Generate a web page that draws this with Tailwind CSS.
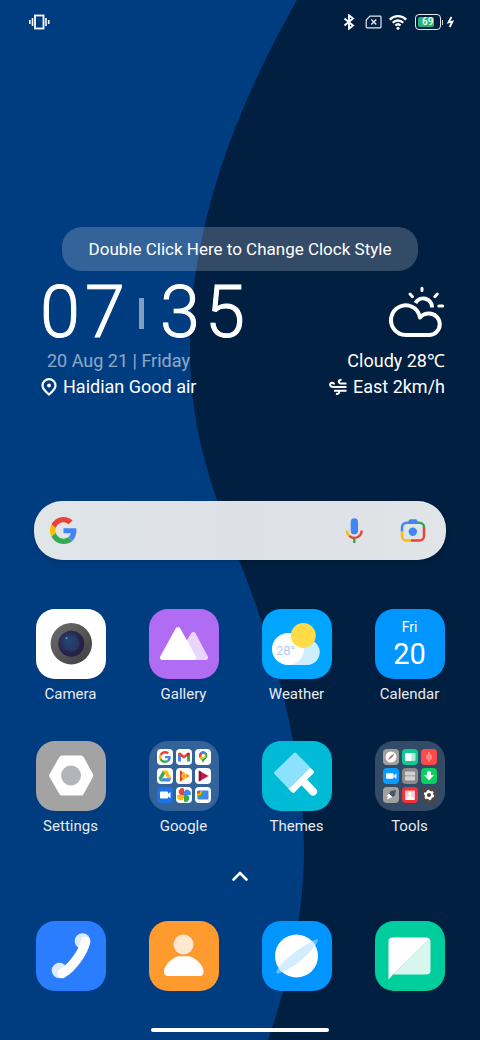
<!DOCTYPE html>
<html lang="en">
<head>
  <meta charset="UTF-8" />
  <meta name="viewport" content="width=device-width, initial-scale=1.0" />
  <title>Home Screen</title>
  <script src="https://cdn.jsdelivr.net/npm/@tailwindcss/browser@4"></script>
</head>
<body class="relative min-h-screen bg-[#003c80] font-[Roboto,sans-serif] text-white">
  <!-- Wallpaper -->
  <svg class="absolute inset-0 w-full h-full" viewBox="0 0 480 1040" preserveAspectRatio="none" aria-hidden="true">
    <path fill="#001f41" d="M297 0C229 120 190 235 190 350C190 435 216 500 243 570C270 640 303 740 304 850C304 925 285 990 268 1040H480V0Z" />
  </svg>

  <div class="relative min-h-screen flex flex-col">
    <!-- Status bar -->
    <header class="flex items-center justify-between h-11 pl-7 pr-[26px]">
      <svg class="w-[22px] h-4" viewBox="0 0 22 16" fill="none" stroke="#fff" stroke-width="1.6">
        <rect x="7" y="1.5" width="8.5" height="13" stroke-width="1.8" />
        <path d="M4.5 4v8M18 4v8M1.8 6v4M20.7 6v4" />
      </svg>
      <div class="flex items-center">
        <svg class="w-3 h-4 mr-[10px]" viewBox="0 0 12 16" fill="none" stroke="#fff" stroke-width="1.9">
          <path d="M1.500 4.500l8.500 7-4 3.200V1.300l4 3.200-8.500 7" />
        </svg>
        <svg class="w-[17px] h-[14px] mr-[7px]" viewBox="0 0 17 14" fill="none" stroke="#e4e9ef" stroke-width="1.2">
          <path d="M5 1.200H15.200a.8.8 0 0 1 .8.8V12a.8.8 0 0 1-.8.8H2a.8.8 0 0 1-.8-.8V5Z" />
          <path d="M6.300 4.600l5 5M11.300 4.600l-5 5" stroke-width="1.4" />
        </svg>
        <svg class="w-[18px] h-[15px] mr-2" viewBox="0 0 18 15" fill="none" stroke="#fff" stroke-width="2.3">
          <path d="M.8 4.600a11.600 11.600 0 0 1 16.400 0M3.700 7.700a7.500 7.500 0 0 1 10.600 0M6.400 10.500a3.800 3.800 0 0 1 5.200 0" />
          <circle cx="9" cy="13.200" r="1.500" fill="#fff" stroke="none" />
        </svg>
        <div class="flex items-center">
          <div class="w-[26px] h-4 rounded border border-white/90 p-[2px]">
            <div class="w-4 h-full pl-1 flex items-center rounded-xs bg-[#22b573] text-[10px] leading-none font-medium">69</div>
          </div>
          <div class="w-px h-[5px] ml-px bg-white/80"></div>
        </div>
        <svg class="w-[7px] h-3 ml-1" viewBox="0 0 7 12" fill="none" stroke="#fff" stroke-width="1.8"><path d="M4.500 1L1.500 6.500L5.500 5.500L2.700 11" /></svg>
      </div>
    </header>

    <main class="flex-1 flex flex-col">
      <button class="mt-[183px] mx-[62px] h-11 pt-px rounded-[20px] bg-white/20 text-[17px]">Double Click Here to Change Clock Style</button>

      <!-- Clock and weather -->
      <section class="pl-10 pr-[35px] text-[18px]">
        <div class="flex items-center justify-between h-[76px]">
          <div class="flex items-center pt-2 text-[72px] leading-none font-light [-webkit-text-stroke:1px_white]">
            <span class="w-[45px]">0</span>
            <span class="w-[45px]">7</span>
            <span class="w-[5px] h-[31px] ml-[9px] mr-4 bg-white/50"></span>
            <span class="w-[45px]">3</span>
            <span>5</span>
          </div>
          <svg class="w-[57px] h-[51px] mt-[5px]" viewBox="0 0 57 51" fill="none" stroke="#fff" stroke-width="4" stroke-linecap="round">
            <path stroke-linejoin="round" d="M18 49A14.800 14.800 0 1 1 24.500 21C29 23 31 27.500 32 31.500C34 29 37 27.500 41 27.500A10.700 10.700 0 0 1 41 49Z" />
            <path stroke-linecap="butt" d="M27.500 17A8.800 8.800 0 0 1 44 21.500" />
            <path stroke-width="3" d="M34 2.300V4.500M22 8l2.500 2.700M49.300 8l-2.500 2.700M50.800 20h4" />
          </svg>
        </div>
        <div class="flex items-center justify-between h-[26px]">
          <span class="pl-[7px] text-white/55">20 Aug 21 | Friday</span>
          <span>Cloudy 28℃</span>
        </div>
        <div class="flex items-center justify-between h-[27px]">
          <span class="flex items-center gap-[6px] pl-px">
            <svg class="w-4 h-[18px]" viewBox="0 0 16 18" fill="none" stroke="#fff" stroke-width="2.2">
              <path d="M8 16.500C4.500 13.700 1.500 11 1.500 7.600a6.500 6.500 0 0 1 13 0C14.500 11 11.500 13.700 8 16.500Z" />
              <circle cx="8" cy="7.500" r="1.900" fill="#fff" stroke="none" />
            </svg>
            Haidian Good air
          </span>
          <span class="flex items-center gap-[6px]">
            <svg class="w-[18px] h-[18px]" viewBox="0 0 18 18" fill="none" stroke="#fff" stroke-width="2">
              <path d="M17.500 5.500H12C9 5.500 9 1.700 12.500 1.700M17.500 9H4C.5 9 .3 4.800 3 4.800C4.300 4.800 5 5.500 5 6.500M5 12.700H17.500M9.500 12.700C11 14.600 9.800 16.500 7 15.800" />
            </svg>
            East 2km/h
          </span>
        </div>
      </section>

      <!-- Search bar -->
      <form class="mt-[101px] mx-[34px] h-[59px] pl-4 pr-5 flex items-center rounded-[28px] bg-linear-to-r from-[#e5e9eb]/98 via-[#e4e6ea]/97 to-[#e5e9eb]/98 shadow-md">
        <svg class="w-[27px] h-[27px]" viewBox="0 0 48 48"><use href="#google-g" /></svg>
        <input type="search" aria-label="Search" class="flex-1 min-w-0 h-full px-3 text-[17px] text-gray-800 outline-none" />
        <button type="button" aria-label="Voice search" class="mr-9">
          <svg class="w-[19px] h-[27px]" viewBox="0 0 19 27" fill="none" stroke-width="2.4">
            <rect x="5.700" y="1.300" width="7.300" height="16" rx="3.650" fill="#4285f4" />
            <path stroke="#fbbc05" d="M1.900 13.500a7.400 7.400 0 0 0 2.600 5.600" />
            <path stroke="#ea4335" d="M4.300 18.900a7.400 7.400 0 0 0 12.400-5.400" />
            <path stroke="#34a853" d="M9.300 21.500V26" />
          </svg>
        </button>
        <button type="button" aria-label="Search by image">
          <svg class="w-[26px] h-[23px]" viewBox="0 0 26 23" fill="none" stroke-width="2.500">
            <path fill="#4285f4" d="M7 4.500L9 1.200Q9.500.3 10.500.3H15.500Q16.500.3 17 1.200L19 4.500Z" />
            <path stroke="#4285f4" d="M2 12.500V8.200A4.500 4.500 0 0 1 6.500 3.700H18" />
            <path stroke="#34a853" d="M18 3.700H19.500A4.500 4.500 0 0 1 24 8.200V9" />
            <path stroke="#ea4335" d="M24 8.500V17A4.500 4.500 0 0 1 19.500 21.500H11" />
            <path stroke="#fbbc05" d="M2 12.500V17A4.500 4.500 0 0 0 6.500 21.500H11" />
            <circle cx="12.800" cy="12.700" r="4.200" fill="#4285f4" />
          </svg>
        </button>
      </form>

      <!-- Apps -->
      <section class="mt-[49px] px-[14px] grid grid-cols-4 gap-y-[37px] justify-items-center text-[15px] leading-5 text-[#e6ebf1]">
        <button class="flex flex-col items-center gap-[5px]">
          <svg class="w-[70px] h-[70px] rounded-[19px] bg-white" viewBox="0 0 70 70">
            <defs>
              <linearGradient id="ring" x1="0" y1="0" x2="1" y2="1"><stop stop-color="#6e6e6e" /><stop offset="1" stop-color="#3e3e3e" /></linearGradient>
              <radialGradient id="lens" cx=".4" cy=".4"><stop stop-color="#24507a" /><stop offset=".5" stop-color="#293462" /><stop offset="1" stop-color="#252147" /></radialGradient>
            </defs>
            <circle cx="35.300" cy="34.700" r="20.700" fill="url(#ring)" />
            <circle cx="35.300" cy="34.700" r="13" fill="url(#lens)" />
            <circle cx="35.300" cy="34.700" r="8" fill="#27406a" opacity=".6" />
            <circle cx="30.500" cy="29.300" r="1" fill="#5aa6c8" />
          </svg>
          Camera
        </button>
        <button class="flex flex-col items-center gap-[5px]">
          <svg class="w-[70px] h-[70px] rounded-[19px] bg-[#b16cf4]" viewBox="0 0 70 70" fill="#fff" stroke-linejoin="round" stroke="#fff">
            <path fill="#ead6fb" stroke="#ead6fb" stroke-width="5" d="M44.300 25.500L30 48.500H56.500Z" />
            <path stroke-width="5" d="M29 20.500L13.500 48.500H44.500Z" />
          </svg>
          Gallery
        </button>
        <button class="flex flex-col items-center gap-[5px]">
          <svg class="w-[70px] h-[70px] rounded-[19px] bg-[#00a5ff]" viewBox="0 0 70 70">
            <path fill="#cdeeff" d="M26 56H46.500A13 13 0 1 0 38 32Z" />
            <circle cx="26" cy="40" r="16" fill="#fff" />
            <circle cx="41.300" cy="26.500" r="12.500" fill="#ffdc46" />
            <text x="14" y="46" font-size="13" fill="#b4cdf8">28°</text>
          </svg>
          Weather
        </button>
        <button class="flex flex-col items-center gap-[5px]">
          <span class="w-[70px] h-[70px] pt-2 flex flex-col items-center rounded-[19px] bg-[#0095ff] text-white">
            <span class="text-[14px] leading-5">Fri</span>
            <span class="text-[29px] leading-[34px]">20</span>
          </span>
          Calendar
        </button>
        <button class="flex flex-col items-center gap-[5px]">
          <svg class="w-[70px] h-[70px] rounded-[19px] bg-[#a3a3a3]" viewBox="0 0 70 70">
            <path fill="#fff" stroke="#fff" stroke-width="6" stroke-linejoin="round" d="M26 17.500H45L54.300 34.500L45 51.500H26L16.200 34.500Z" />
            <circle cx="35" cy="34.500" r="10" fill="#b1b5ba" />
          </svg>
          Settings
        </button>
        <button class="flex flex-col items-center gap-[5px]">
          <span class="w-[70px] h-[70px] p-2 grid grid-cols-3 gap-[3px] rounded-[19px] bg-white/20">
            <svg class="rounded bg-white" viewBox="-8 -8 64 64">
              <g id="google-g">
                <path fill="#ea4335" d="M24 9.500c3.540 0 6.710 1.220 9.210 3.600l6.850-6.850C35.900 2.380 30.470 0 24 0 14.620 0 6.510 5.380 2.560 13.220l7.980 6.190C12.430 13.720 17.740 9.500 24 9.500z" />
                <path fill="#4285f4" d="M46.980 24.550c0-1.570-.15-3.090-.38-4.550H24v9.020h12.940c-.58 2.960-2.260 5.480-4.780 7.180l7.730 6c4.510-4.180 7.090-10.360 7.090-17.650z" />
                <path fill="#fbbc05" d="M10.530 28.590c-.48-1.450-.76-2.990-.76-4.590s.27-3.140.76-4.590l-7.980-6.190C.92 16.460 0 20.120 0 24c0 3.880.92 7.540 2.560 10.780l7.970-6.190z" />
                <path fill="#34a853" d="M24 48c6.480 0 11.930-2.130 15.890-5.810l-7.730-6c-2.150 1.450-4.920 2.300-8.160 2.300-6.260 0-11.570-4.220-13.470-9.910l-7.980 6.190C6.510 42.620 14.620 48 24 48z" />
              </g>
            </svg>
            <svg class="rounded bg-white" viewBox="0 0 16 16">
              <path fill="#4285f4" d="M2 4.500H5V12.500H3Q2 12.500 2 11.500Z" />
              <path fill="#34a853" d="M11 4.500H14V11.500Q14 12.500 13 12.500H11Z" />
              <path fill="#ea4335" d="M2 5Q2.500 2.500 5 4L8 6.400L11 4V7.300L8 9.800L2 5.500Z" />
              <path fill="#c5221f" d="M11 4Q13.500 2.500 14 5L11 7.500Z" />
            </svg>
            <svg class="rounded bg-white" viewBox="0 0 16 16">
              <path fill="#34a853" d="M8 14.200C7.600 11.500 4 9.500 4 6.500A4.200 4.200 0 0 1 12.400 6.500C12.400 9.500 8.800 11 8 14.200Z" />
              <path fill="#fbbc05" d="M4.500 8.500L9.500 3L11 8L6.500 11Z" />
              <path fill="#ea4335" d="M4 6.500Q4 4.500 5.500 3.200L8 5.200L4.600 8.700Z" />
              <path fill="#4285f4" d="M5.500 3.200Q8 1.200 11 3.400L7.500 7.300Z" />
              <circle cx="8.200" cy="6.500" r="1.600" fill="#fff" />
            </svg>
            <svg class="rounded bg-white" viewBox="0 0 16 16">
              <path fill="#34a853" d="M6 2.500L1.500 10.300L3.500 13.500L8 5.800Z" />
              <path fill="#fbbc05" d="M6 2.500H10L14.500 10.300H10.500Z" />
              <path fill="#4285f4" d="M5.500 10.300H14.500L12.500 13.500H3.500Z" />
            </svg>
            <svg class="rounded bg-white" viewBox="0 0 16 16">
              <path fill="#fb8c00" d="M4 2.500L14 8L4 13.500Z" />
              <path fill="#ea4335" d="M4 2.500L6 3.600V12.400L4 13.500Z" />
              <circle cx="8" cy="8" r="2" fill="none" stroke="#ffe082" stroke-width="1" />
            </svg>
            <svg class="rounded bg-white" viewBox="0 0 16 16">
              <path fill="#c8164a" d="M3.800 2.500L13.500 8L3.800 13.500Z" />
              <path fill="#8e1038" d="M3.800 2.500L6 3.800V12.200L3.800 13.500Z" />
            </svg>
            <svg class="rounded bg-[#1a73e8]" viewBox="0 0 16 16" fill="#fff">
              <rect x="3" y="4.500" width="8" height="7" rx=".8" />
              <path d="M10 7.500L13.500 5V11.200L10 9Z" />
            </svg>
            <!-- Four-blade pinwheel, one blade per quadrant -->
            <svg class="rounded bg-white" viewBox="0 0 16 16">
              <path fill="#ea4335" d="M8 1.500V8H4.800A3.200 3.200 0 0 1 8 1.500Z" />
              <path fill="#4285f4" d="M14.500 8H8V4.800A3.200 3.200 0 0 1 14.500 8Z" />
              <path fill="#34a853" d="M8 14.500V8H11.200A3.200 3.200 0 0 1 8 14.500Z" />
              <path fill="#fbbc05" d="M1.500 8H8V11.200A3.200 3.200 0 0 1 1.500 8Z" />
            </svg>
            <svg class="rounded bg-white" viewBox="0 0 16 16">
              <rect x="2.500" y="3.500" width="11" height="9" rx=".8" fill="#4285f4" />
              <path fill="#34a853" d="M2.500 4H9A6.500 6.500 0 0 1 2.500 10.500Z" />
              <path fill="#fbbc05" d="M2.500 4H7.300A4.800 4.800 0 0 1 2.500 8.800Z" />
              <path fill="#ea4335" d="M2.500 4H5.500A3 3 0 0 1 2.500 7Z" />
            </svg>
          </span>
          Google
        </button>
        <button class="flex flex-col items-center gap-[5px]">
          <svg class="w-[70px] h-[70px] rounded-[19px] bg-[#00bbd6]" viewBox="0 0 70 70" stroke-linejoin="round" stroke-linecap="round">
            <path fill="#fff" stroke="#fff" stroke-width="3" d="M47 27.500L50.700 31L31.300 50.500L28 47.500Z" />
            <path stroke="#fff" stroke-width="8" d="M41.500 40.500L51 50.500" />
            <path fill="#fff" d="M33 50L39 44Q42 43 46 49L50 45Q43 41 45 37L40 36Z" />
            <path fill="#8ce1ff" stroke="#8ce1ff" stroke-width="3" d="M33 13L46.500 26.500L27 46L13.500 32Z" />
          </svg>
          Themes
        </button>
        <button class="flex flex-col items-center gap-[5px]">
          <span class="w-[70px] h-[70px] p-2 grid grid-cols-3 gap-[3px] rounded-[19px] bg-white/20">
            <svg class="rounded bg-[#a0a0a0]" viewBox="0 0 16 16">
              <circle cx="8" cy="8" r="5.500" fill="#fff" />
              <path fill="#777" d="M11.500 4.500L8.800 8.800L7.200 7.200Z" />
              <path fill="#e34b4b" d="M4.800 11.200L7.200 7.200L8.800 8.800Z" />
            </svg>
            <svg class="rounded bg-[#10c98f]" viewBox="0 0 16 16">
              <rect x="5" y="4" width="8.500" height="8" rx="1" fill="#a9ecd6" />
              <path fill="#fff" d="M4 4H9.500V12H4Q3 12 3 11V5Q3 4 4 4Z" />
            </svg>
            <svg class="rounded bg-[#ff4a4a]" viewBox="0 0 16 16" stroke="#ffb5b5" stroke-width="1.100" stroke-linecap="round">
              <path d="M8 3.500v9M6 6v4M10 6v4" />
            </svg>
            <svg class="rounded bg-[#0a9bff]" viewBox="0 0 16 16" fill="#fff">
              <rect x="3" y="5.300" width="7.500" height="5.500" rx="1" />
              <path fill="#d6eeff" d="M10.500 7.500L13.500 5.500V10.800L10.500 9Z" />
            </svg>
            <svg class="rounded bg-[#8a8a8a]" viewBox="0 0 16 16" fill="#d2d2d2">
              <rect x="3" y="3.500" width="10" height="4" rx=".8" />
              <rect x="3" y="8.300" width="10" height="4.200" rx=".8" />
            </svg>
            <svg class="rounded bg-[#0bcf62]" viewBox="0 0 16 16" fill="#fff">
              <path d="M6 3.500H10V7H13L8 12.500L3 7H6Z" />
            </svg>
            <svg class="rounded bg-[#a0a0a0]" viewBox="0 0 16 16">
              <path fill="#44546a" d="M13 3L12 8.500L9.300 10L6 6.800L7.500 4Z" />
              <path fill="#fff" d="M6 6.800L9.300 10L3.800 12.500L5 9.800L3.500 9Z" />
            </svg>
            <svg class="rounded bg-[#f52f36]" viewBox="0 0 16 16">
              <rect x="3" y="3.500" width="10" height="9.500" rx="1" fill="#ffc9cb" />
              <circle cx="8" cy="6.700" r="1.800" fill="#fff" />
              <path fill="#fff" d="M3.500 13Q5 9 8 9T12.500 13Z" />
            </svg>
            <svg class="rounded bg-[#484848]" viewBox="0 0 16 16" fill="none" stroke="#fff">
              <circle cx="8" cy="8" r="3.200" stroke-width="2.300" />
              <circle cx="8" cy="8" r="4.600" stroke-width="1.200" stroke-dasharray="2.400 2.400" />
            </svg>
          </span>
          Tools
        </button>
      </section>

      <button aria-label="Open app drawer" class="mt-[30px] self-center">
        <svg class="w-[18px] h-5" viewBox="0 0 18 20" fill="none" stroke="#fff" stroke-width="2.600" stroke-linecap="round" stroke-linejoin="round"><path d="M2.500 13.500L9 7L15.500 13.500" /></svg>
      </button>
    </main>

    <!-- Dock -->
    <nav class="mt-[35px] px-[14px] grid grid-cols-4 justify-items-center">
      <button aria-label="Phone">
        <svg class="w-[70px] h-[70px] rounded-[19px] bg-[#2b7dff]" viewBox="0 0 70 70">
          <circle cx="46.500" cy="20" r="7.800" fill="#dce9ff" />
          <circle cx="23.500" cy="49.500" r="7.800" fill="#dce9ff" />
          <path fill="none" stroke="#fff" stroke-width="9.500" stroke-linecap="round" d="M49.500 20.500C47.500 31 36 47 26 52.500" />
        </svg>
      </button>
      <button aria-label="Contacts">
        <svg class="w-[70px] h-[70px] rounded-[19px] bg-[#ff9a2e]" viewBox="0 0 70 70">
          <circle cx="34.500" cy="23.500" r="10" fill="#ffe8d0" />
          <path fill="#fff" d="M30 35.300H39.500C46 36 54.500 44 54.500 50.500Q54.500 55 50.500 55H19Q15 55 15 50.500C15 44 23.500 36 30 35.300Z" />
        </svg>
      </button>
      <button aria-label="Browser">
        <svg class="w-[70px] h-[70px] rounded-[19px] bg-[#0095ff]" viewBox="0 0 70 70">
          <path fill="#66bfff" d="M55.500 18Q58 20 46 33Q31 48 16 52.500Q13 52.500 15 49Q20 41 33 31Q48 20 55.500 18Z" />
          <circle cx="34.500" cy="35" r="21.500" fill="#fff" />
          <clipPath id="planet"><circle cx="34.500" cy="35" r="21.500" /></clipPath>
          <path clip-path="url(#planet)" fill="#d3edff" d="M55.500 18Q58 20 46 33Q31 48 16 52.500Q13 52.500 15 49Q20 41 33 31Q48 20 55.500 18Z" />
        </svg>
      </button>
      <button aria-label="Messages">
        <svg class="w-[70px] h-[70px] rounded-[19px] bg-[#00cd9c]" viewBox="0 0 70 70">
          <path fill="#d8f6ee" d="M54 17.500Q55.500 18.500 55.500 20.500V49.500Q55.500 53.500 51.500 53.500H18Z" />
          <path fill="#fff" d="M13.500 58.500V20.500Q13.500 16.500 17.500 16.500H51.500Q53 16.500 54.200 17.500L18 53.500Z" />
        </svg>
      </button>
    </nav>
    <div class="mt-[37px] mb-2 self-center w-[178px] h-1 rounded-full bg-white"></div>
  </div>
</body>
</html>
